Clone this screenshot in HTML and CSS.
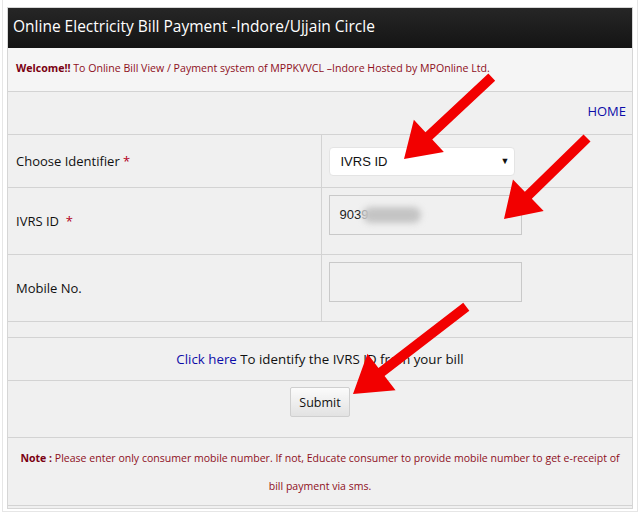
FILE: index.html
```html
<!DOCTYPE html>
<html lang="en">
<head>
    <meta charset="UTF-8">
    <title>Online Electricity Bill Payment</title>
    <link rel="stylesheet" href="styles.css">
</head>
<body>
    <div class="page">
        <div class="panel">
            <div class="panel-head">Online Electricity Bill Payment -Indore/Ujjain Circle</div>
            <p class="welcome"><b>Welcome!!</b> To Online Bill View / Payment system of MPPKVVCL –Indore Hosted by MPOnline Ltd.</p>

            <table class="bill-form">
                <tr class="row-home">
                    <td colspan="2" class="home-cell"><a href="#" class="home-link">HOME</a></td>
                </tr>
                <tr class="row-choose">
                    <td class="label-cell">Choose Identifier <span class="req">*</span></td>
                    <td class="field-cell">
                        <div class="select-box">IVRS ID<span class="caret">▼</span></div>
                    </td>
                </tr>
                <tr class="row-input">
                    <td class="label-cell">IVRS ID &nbsp;<span class="req">*</span></td>
                    <td class="field-cell top">
                        <div class="text-box">903<span class="hidden-digits">9</span><span class="blur"></span></div>
                    </td>
                </tr>
                <tr class="row-input">
                    <td class="label-cell">Mobile No.</td>
                    <td class="field-cell top">
                        <div class="text-box"></div>
                    </td>
                </tr>
                <tr class="row-spacer">
                    <td colspan="2"></td>
                </tr>
                <tr class="row-link">
                    <td colspan="2" class="center-cell"><a href="#" class="blue-link">Click here</a> To identify the IVRS ID from your bill</td>
                </tr>
                <tr class="row-submit">
                    <td colspan="2" class="submit-cell"><button class="submit-btn">Submit</button></td>
                </tr>
                <tr class="row-note">
                    <td colspan="2" class="note-cell"><b>Note :</b> Please enter only consumer mobile number. If not, Educate consumer to provide mobile number to get e-receipt of bill payment via sms.</td>
                </tr>
            </table>
        </div>

        <!-- red pointer arrows drawn over the form -->
        <svg class="arrows" width="640" height="513" viewBox="0 0 640 513">
            <g fill="#f20000">
                <polygon transform="translate(403 159) rotate(137)" points="-120,-5 -34,-5 -34,-22 0,0 -34,22 -34,5 -120,5"/>
                <polygon transform="translate(503 219) rotate(135.7)" points="-116,-5 -34,-5 -34,-22 0,0 -34,22 -34,5 -116,5"/>
                <polygon transform="translate(352 394) rotate(142.4)" points="-143,-5 -36,-5 -36,-23 0,0 -36,23 -36,5 -143,5"/>
            </g>
        </svg>
    </div>
</body>
</html>
```

FILE: styles.css
```css
* {
    box-sizing: border-box;
}

body {
    margin: 0;
    background: #fff;
    font-family: 'Open Sans', sans-serif;
    color: #111;
}

.page {
    position: relative;
    width: 636px;
    height: 512px;
    margin-left: 2px;
    padding: 7px 4px 0 4px;
    border: 1px solid #e6e6e6;
    border-top: none;
}

.panel {
    width: 626px;
    height: 502px;
    background: #f0f0f0;
    border: 1px solid #d6d6d6;
    padding-bottom: 2px;
}

.panel-head {
    height: 40px;
    background: linear-gradient(#262626, #141414);
    color: #fff;
    font-size: 15.5px;
    line-height: 37px;
    padding-left: 5px;
}

.welcome {
    margin: 0;
    height: 43px;
    line-height: 41px;
    padding-left: 8px;
    font-size: 10.6px;
    color: #8e0f1c;
    background: #f5f5f5;
}

.welcome b {
    color: #7a0012;
}

.bill-form {
    width: 100%;
    border-collapse: collapse;
    font-size: 13px;
}

.bill-form td {
    border: 1px solid #d3d3d3;
    padding: 0;
}

.bill-form td:first-child {
    border-left: none;
}

.bill-form td:last-child {
    border-right: none;
}

.row-home { height: 43px; }
.row-choose { height: 53px; }
.row-input { height: 67px; }
.row-spacer { height: 16px; }
.row-link { height: 43px; }
.row-submit { height: 57px; }
.row-note { height: 68px; }

.home-cell {
    text-align: right;
    padding-right: 6px !important;
    padding-bottom: 4px !important;
}

.home-link {
    color: #0c0ca8;
    text-decoration: none;
    font-size: 13px;
}

.label-cell {
    width: 313px;
    padding-left: 8px !important;
    vertical-align: middle;
}

.req {
    color: #b3001b;
}

.field-cell {
    padding-left: 7px !important;
    vertical-align: middle;
}

.top {
    vertical-align: top;
    padding-top: 7px !important;
}

.select-box {
    position: relative;
    width: 186px;
    height: 29px;
    background: #fff;
    border: 1px solid #e4e4e4;
    border-radius: 4px;
    font-family: 'Liberation Sans', Arial, sans-serif;
    font-size: 13px;
    line-height: 27px;
    padding-left: 11px;
}

.caret {
    position: absolute;
    right: 4px;
    top: 0;
    font-size: 9px;
}

.text-box {
    position: relative;
    width: 193px;
    height: 40px;
    background: #f0f0f0;
    border: 1px solid #c9c9c9;
    font-family: 'Liberation Sans', Arial, sans-serif;
    font-size: 13px;
    line-height: 38px;
    padding-left: 10px;
    color: #222;
}

.hidden-digits {
    color: #999;
}

.blur {
    position: absolute;
    left: 33px;
    top: 11px;
    width: 58px;
    height: 16px;
    border-radius: 8px;
    background: #c4c4c4;
    filter: blur(3px);
}

.center-cell {
    text-align: center;
    vertical-align: middle;
    font-size: 13.3px;
}

.blue-link {
    color: #0c0ca8;
    text-decoration: none;
}

.submit-cell {
    text-align: center;
    vertical-align: top;
    padding-top: 6px !important;
}

.submit-btn {
    width: 60px;
    height: 30px;
    border: 1px solid #cfcfcf;
    border-radius: 2px;
    background: linear-gradient(#fbfbfb, #e2e2e2);
    font-family: 'Open Sans', sans-serif;
    font-size: 12.5px;
    color: #111;
    padding: 0;
}

.note-cell {
    text-align: center;
    vertical-align: middle;
    font-size: 10.55px;
    line-height: 28px;
    color: #8e0f1c;
    padding: 0 10px !important;
    border-bottom: 1px solid #d3d3d3;
}

.note-cell b {
    color: #7a0012;
}

.arrows {
    position: absolute;
    left: -2px;
    top: 0;
    pointer-events: none;
}
```
